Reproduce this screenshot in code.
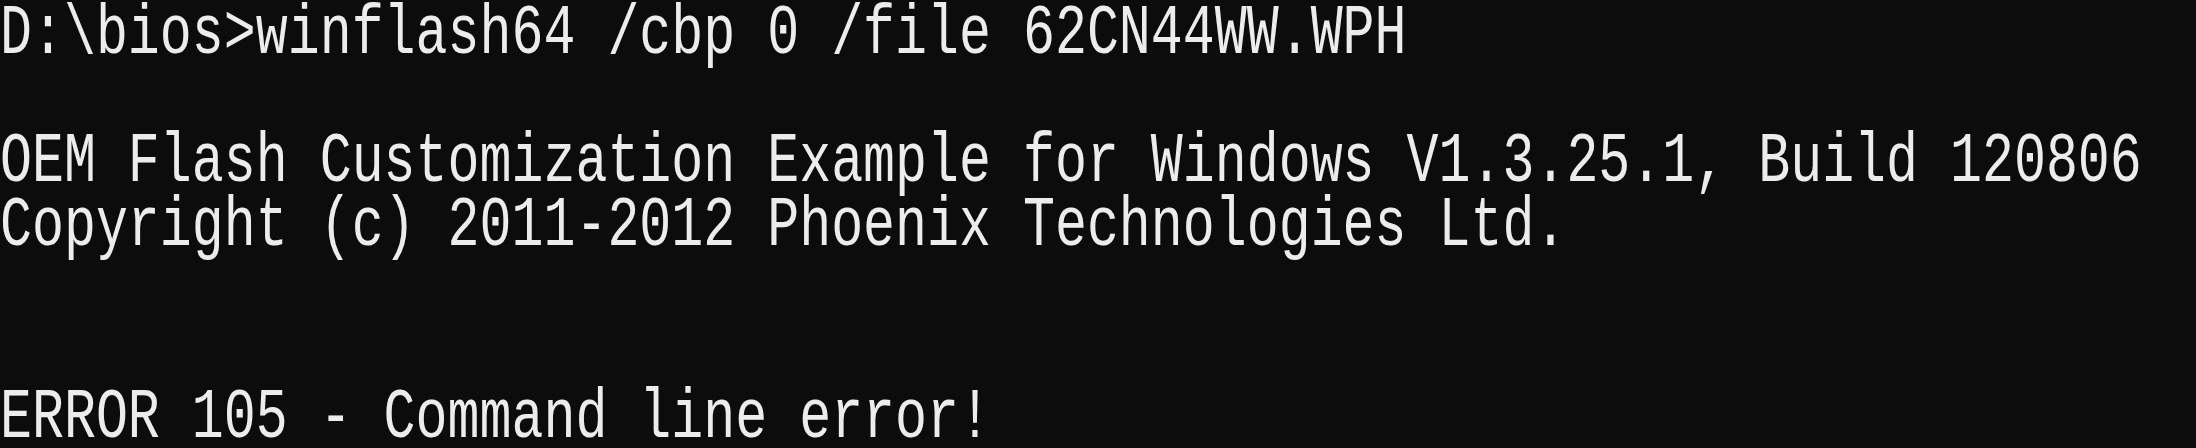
const lines = [
  "D:\\bios>winflash64 /cbp 0 /file 62CN44WW.WPH",
  "",
  "OEM Flash Customization Example for Windows V1.3.25.1, Build 120806",
  "Copyright (c) 2011-2012 Phoenix Technologies Ltd.",
  "",
  "",
  "ERROR 105 - Command line error!",
];

const App = () => {
  return (
    <div className="h-[448px] w-[2196px] overflow-hidden bg-[#0c0c0c] pt-[3px]">
      <div className="origin-top-left scale-x-[0.761] font-['Liberation_Mono',monospace] text-[70px] leading-[64px] text-[#ececea]">
        {lines.map((line, i) => (
          <div key={i} className="h-[64px] whitespace-pre">
            {line}
          </div>
        ))}
      </div>
    </div>
  );
};

export default App;
